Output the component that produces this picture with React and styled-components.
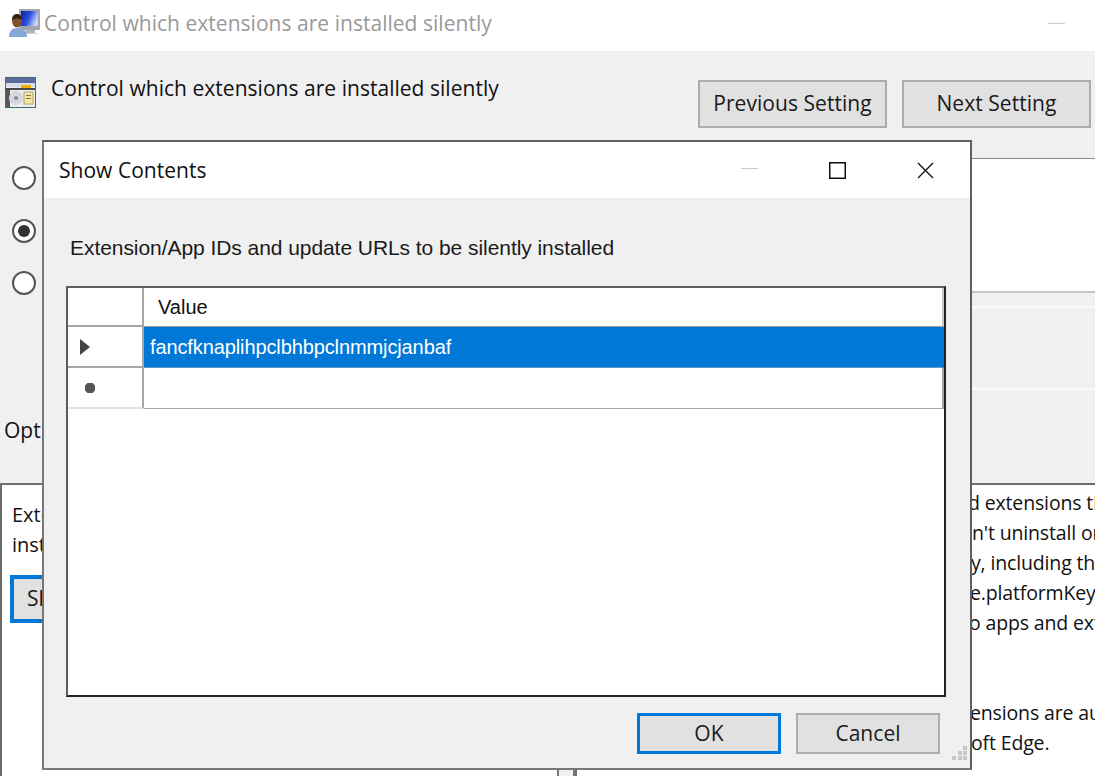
import React from 'react';
import styled, { createGlobalStyle } from 'styled-components';

const GlobalStyle = createGlobalStyle`
  html, body {
    margin: 0;
    padding: 0;
    background: #fff;
    overflow: hidden;
  }
  * {
    box-sizing: border-box;
  }
`;

const uiFont = `'Open Sans', 'Noto Sans', sans-serif`;
const gridFont = `'Liberation Sans', Arial, sans-serif`;

const Page = styled.div`
  position: relative;
  width: 1095px;
  height: 776px;
  overflow: hidden;
  background: #f0f0f0;
  color: #111;
  font-family: ${uiFont};
  font-size: 20px;
  display: flex;
  flex-direction: column;
`;

const TitleBar = styled.div`
  height: 51px;
  flex: none;
  background: #fff;
  display: flex;
  align-items: center;
  padding: 0 30px 4px 9px;
`;

const TitleText = styled.div`
  margin-left: 4px;
  margin-top: -1px;
  font-size: 21px;
  color: #999;
  letter-spacing: 0.03px;
  flex: 1;
  white-space: nowrap;
`;

const Minimize = styled.div`
  width: 17px;
  height: 1px;
  background: #ccc;
  margin-top: ${(p) => p.$top || 0}px;
`;

const Header = styled.div`
  height: 107px;
  flex: none;
  display: flex;
  justify-content: space-between;
  padding: 26px 4px 0 5px;
`;

const HeaderTitle = styled.div`
  display: flex;
  align-items: flex-start;
  gap: 15px;
  white-space: nowrap;
  font-size: 21px;
  letter-spacing: 0.03px;
  line-height: 22px;
`;

const NavButtons = styled.div`
  display: flex;
  gap: 15px;
  padding-top: 3px;
`;

const Button = styled.button`
  width: ${(p) => p.$width || 144}px;
  height: ${(p) => p.$height || 41}px;
  padding: 0 0 2px;
  background: #e1e1e1;
  border: ${(p) => (p.$primary ? '3px solid #0078d7' : '2px solid #adadad')};
  color: #1a1a1a;
  font-family: ${uiFont};
  font-size: 21px;
  letter-spacing: 0.05px;
  white-space: nowrap;
  overflow: hidden;
`;

const Settings = styled.div`
  height: 325px;
  flex: none;
  display: grid;
  grid-template-columns: 400px 1fr;
`;

const StateColumn = styled.div`
  padding-left: 12px;
  display: flex;
  flex-direction: column;
  gap: 12.5px;
`;

const RadioRow = styled.div`
  display: flex;
  align-items: center;
  height: 40px;
`;

const Radio = styled.span`
  width: 24px;
  height: 24px;
  flex: none;
  border-radius: 50%;
  border: 2px solid #555;
  background: #fff;
  display: flex;
  align-items: center;
  justify-content: center;

  &::after {
    content: '';
    width: 12px;
    height: 12px;
    border-radius: 50%;
    background: ${(p) => (p.$checked ? '#333' : 'transparent')};
  }
`;

const OptionsLabel = styled.div`
  margin: 100px 0 0 -8px;
  font-size: 21px;
  line-height: 28px;
`;

const InfoColumn = styled.div`
  display: flex;
  flex-direction: column;
`;

const CommentBox = styled.div`
  height: 135px;
  background: #fff;
  border-top: 1px solid #8a8a8a;
  border-bottom: 2px solid #c4c4c4;
`;

const SupportedBox = styled.div`
  flex: 1;
  margin-top: 13px;
  border-top: 2px solid #fafafa;
`;

const SupportedDivider = styled.div`
  height: 2px;
  margin-top: 80px;
  background: #fafafa;
`;

const Panes = styled.div`
  flex: 1;
  display: grid;
  grid-template-columns: 557px 1fr;
  column-gap: 18px;
  min-height: 0;
`;

const Pane = styled.div`
  background: #fff;
  border-top: 2px solid #6d6d6d;
  border-left: 2px solid #6d6d6d;
  overflow: hidden;
  white-space: nowrap;
  font-size: 20px;
  line-height: 30px;
  padding: ${(p) => p.$padding};
`;

const HelpLine = styled.div`
  padding-left: ${(p) => p.$indent}px;
  margin-top: ${(p) => p.$gap || 0}px;
  font-size: 19.5px;
  letter-spacing: -0.15px;
`;

const ShowButton = styled(Button)`
  display: block;
  margin: 15px 0 0 -2px;
  border-width: 4px;
  text-align: left;
  padding-left: 13px;
`;

const Dialog = styled.div`
  position: absolute;
  left: 42px;
  top: 140px;
  width: 930px;
  height: 630px;
  background: #f0f0f0;
  border: 2px solid #5f5f5f;
  border-left-color: #777;
  border-bottom-color: #777;
  display: flex;
  flex-direction: column;
`;

const DialogTitleBar = styled.div`
  height: 56px;
  flex: none;
  background: #fff;
  display: flex;
  align-items: center;
  padding: 0 36px 0 15px;
`;

const DialogTitle = styled.div`
  flex: 1;
  font-size: 21px;
  letter-spacing: 0.03px;
`;

const WindowControls = styled.div`
  display: flex;
  align-items: center;
  gap: 71px;
`;

const DialogBody = styled.div`
  flex: 1;
  display: flex;
  flex-direction: column;
  padding: 37px 24px 0 22px;
  min-height: 0;
`;

const FieldLabel = styled.div`
  font-family: ${gridFont};
  font-size: 21px;
  line-height: 26px;
  padding-left: 4px;
  letter-spacing: -0.06px;
  color: #1a1a1a;
`;

const DataGrid = styled.div`
  height: 411px;
  margin-top: 25px;
  background: #fff;
  border: 2px solid #5d5d5d;
  border-right-color: #222;
  border-bottom-color: #222;
  display: grid;
  grid-template-columns: 76px 1fr;
  grid-template-rows: 39px 41px 41px 1fr;
  font-family: ${gridFont};
  font-size: 20px;
  letter-spacing: -0.11px;
`;

const RowHeader = styled.div`
  display: flex;
  align-items: center;
  padding-left: ${(p) => p.$indent || 11}px;
  border-right: 2px solid #a6a6a6;
  border-bottom: 2px solid ${(p) => (p.$light ? '#e4e4e4' : '#a6a6a6')};
`;

const ColumnHeader = styled.div`
  display: flex;
  align-items: center;
  padding-left: 14px;
  border-right: 2px solid #c8c8c8;
  border-bottom: 1px solid #9a9a9a;
  letter-spacing: 0;
`;

const Cell = styled.div`
  display: flex;
  align-items: center;
  padding-left: 6px;
  white-space: nowrap;
  background: ${(p) => (p.$selected ? '#0078d7' : '#fff')};
  color: ${(p) => (p.$selected ? '#fff' : '#111')};
  border-right: 2px solid ${(p) => (p.$selected ? '#0078d7' : '#a6a6a6')};
  border-bottom: 1px solid ${(p) => (p.$selected ? '#5c9bd0' : '#a6a6a6')};
`;

const DialogActions = styled.div`
  display: flex;
  justify-content: flex-end;
  gap: 15px;
  padding: 16px 6px 0 0;
`;

const Grip = styled.div`
  position: absolute;
  right: 3px;
  bottom: 1px;
`;

const Splitter = styled.div`
  position: absolute;
  left: 557px;
  top: 768px;
  width: 18px;
  height: 8px;
  background: #f0f0f0;
  border-left: 2px solid #777;
  border-right: 2px solid #777;
`;

const PolicyIcon = () => (
  <svg width="31" height="29" viewBox="0 0 31 29">
    <defs>
      <linearGradient id="screen" x1="0" x2="1" y1="0" y2="0.4">
        <stop offset="0" stopColor="#0b1fa8" />
        <stop offset="0.55" stopColor="#2b4fe0" />
        <stop offset="1" stopColor="#c4d2f5" />
      </linearGradient>
    </defs>
    <rect x="10" y="0" width="21" height="21" rx="1" fill="#a2a6ac" />
    <rect x="12" y="2" width="17" height="15" fill="url(#screen)" />
    <rect x="17" y="21" width="9" height="3" fill="#b2b5ba" />
    <rect x="14" y="24" width="15" height="1" fill="#d0d2d6" />
    <path d="M0 28c0-6 3-9 9-9s9 3 9 9z" fill="#86a8d8" />
    <ellipse cx="8" cy="12" rx="5" ry="6.500" fill="#80502c" />
    <path d="M3 11c0-4 2-6 5-6s5 2 5 6c-2-2-7-2-10 0z" fill="#33200f" />
  </svg>
);

const SettingIcon = () => (
  <svg width="31" height="31" viewBox="0 0 31 31">
    <rect x="0.5" y="0.5" width="30" height="30" fill="#eceef0" stroke="#3d6f6f" />
    <rect x="1" y="1" width="29" height="5" fill="#5b6aa0" />
    <rect x="1" y="6" width="29" height="4" fill="#d8dce4" />
    <rect x="16" y="8" width="10" height="3" fill="#f0b400" />
    <rect x="1" y="11" width="29" height="2" fill="#4a4a4a" />
    <rect x="1" y="13" width="4" height="17" fill="#585858" />
    <circle cx="11" cy="21" r="7" fill="#d6d6de" />
    <circle cx="11" cy="21" r="2" fill="#8a8a96" />
    <rect x="19" y="15" width="9" height="12" fill="#f4e6a8" stroke="#b9a45a" />
    <rect x="21" y="18" width="5" height="1" fill="#8a7a3a" />
    <rect x="21" y="21" width="5" height="1" fill="#8a7a3a" />
  </svg>
);

const MaximizeIcon = () => (
  <svg width="17" height="17" viewBox="0 0 17 17">
    <rect x="0.75" y="0.75" width="15.5" height="15.5" fill="none" stroke="#111" strokeWidth="1.5" />
  </svg>
);

const CloseIcon = () => (
  <svg width="17" height="17" viewBox="0 0 17 17">
    <path d="M1 1l15 15M16 1L1 16" fill="none" stroke="#111" strokeWidth="1.4" />
  </svg>
);

const RowArrow = () => (
  <svg width="12" height="18" viewBox="0 0 12 18">
    <path d="M1 1l10 8-10 8z" fill="#444" />
  </svg>
);

const NewRowMark = () => (
  <svg width="12" height="12" viewBox="0 0 12 12">
    <path d="M3.5 1h5L11 3.5v5L8.500 11h-5L1 8.500v-5z" fill="#555" />
  </svg>
);

const GripIcon = () => (
  <svg width="15" height="15" viewBox="0 0 15 15">
    <path d="M11 0h4v4h-4zM6 5h4v4H6zM11 5h4v4h-4zM0 10h4v4H0zM6 10h4v4H6zM11 10h4v4h-4z" fill="#c6c6c6" />
  </svg>
);

const App = () => {
  return (
    <Page>
      <GlobalStyle />
      <TitleBar>
        <PolicyIcon />
        <TitleText>Control which extensions are installed silently</TitleText>
        <Minimize />
      </TitleBar>

      <Header>
        <HeaderTitle>
          <SettingIcon />
          Control which extensions are installed silently
        </HeaderTitle>
        <NavButtons>
          <Button $width={189} $height={48}>Previous Setting</Button>
          <Button $width={189} $height={48}>Next Setting</Button>
        </NavButtons>
      </Header>

      <Settings>
        <StateColumn>
          <RadioRow><Radio /></RadioRow>
          <RadioRow><Radio $checked /></RadioRow>
          <RadioRow><Radio /></RadioRow>
          <OptionsLabel>Options:</OptionsLabel>
        </StateColumn>
        <InfoColumn>
          <CommentBox />
          <SupportedBox>
            <SupportedDivider />
          </SupportedBox>
        </InfoColumn>
      </Settings>

      <Panes>
        <Pane $padding="15px 0 0 10px">
          <div>Extension/App IDs and update URLs to be silently</div>
          <div>installed</div>
          <ShowButton $primary $width={190} $height={48}>Show...</ShowButton>
        </Pane>
        <Pane $padding="3px 0 0 0">
          <HelpLine $indent={391}>d extensions that</HelpLine>
          <HelpLine $indent={395}>n't uninstall or</HelpLine>
          <HelpLine $indent={394}>y, including the</HelpLine>
          <HelpLine $indent={393}>e.platformKeys</HelpLine>
          <HelpLine $indent={392}>o apps and extensions</HelpLine>
          <HelpLine $indent={393} $gap={60}>ensions are automatically</HelpLine>
          <HelpLine $indent={394}>oft Edge.</HelpLine>
        </Pane>
      </Panes>

      <Splitter />

      <Dialog>
        <DialogTitleBar>
          <DialogTitle>Show Contents</DialogTitle>
          <WindowControls>
            <Minimize $top={-4} />
            <MaximizeIcon />
            <CloseIcon />
          </WindowControls>
        </DialogTitleBar>
        <DialogBody>
          <FieldLabel>Extension/App IDs and update URLs to be silently installed</FieldLabel>
          <DataGrid>
            <RowHeader />
            <ColumnHeader>Value</ColumnHeader>
            <RowHeader><RowArrow /></RowHeader>
            <Cell $selected>fancfknaplihpclbhbpclnmmjcjanbaf</Cell>
            <RowHeader $light $indent={16}><NewRowMark /></RowHeader>
            <Cell />
          </DataGrid>
          <DialogActions>
            <Button $primary>OK</Button>
            <Button>Cancel</Button>
          </DialogActions>
        </DialogBody>
        <Grip><GripIcon /></Grip>
      </Dialog>
    </Page>
  );
};

export default App;
